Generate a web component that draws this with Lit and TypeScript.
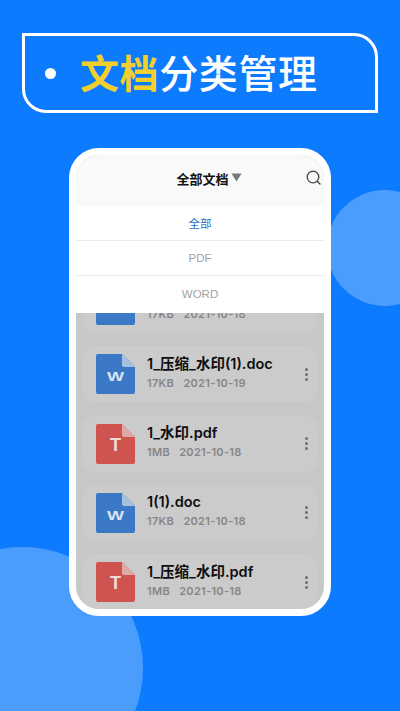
import { LitElement, html, css, svg } from "lit";
import { customElement } from "lit/decorators.js";

interface Doc { name: string; meta: string; size: string; kind: "w" | "t"; }

const DOCS: Doc[] = [
  { name: "", size: "17KB", meta: "2021-10-18", kind: "w" },
  { name: "1_压缩_水印(1).doc", size: "17KB", meta: "2021-10-19", kind: "w" },
  { name: "1_水印.pdf", size: "1MB", meta: "2021-10-18", kind: "t" },
  { name: "1(1).doc", size: "17KB", meta: "2021-10-18", kind: "w" },
  { name: "1_压缩_水印.pdf", size: "1MB", meta: "2021-10-18", kind: "t" },
];

@customElement("app-root")
export class AppRoot extends LitElement {
  static styles = css`
    :host { display: block; width: 400px; height: 711px; font-family: "Inter", "Liberation Sans", "Noto Sans CJK SC", sans-serif; }
    .page { position: relative; width: 400px; height: 711px; background: #0c7bfe; overflow: hidden; padding: 33px 22px 0; box-sizing: border-box; display: flex; flex-direction: column; align-items: center; }
    .blob { position: absolute; border-radius: 50%; background: #4b9dfd; }
    .blob.r { width: 116px; height: 116px; left: 327px; top: 190px; }
    .blob.l { width: 242px; height: 242px; left: -99px; top: 547px; }
    .banner { position: relative; width: 356px; height: 80px; box-sizing: border-box; border: 3px solid #fff; border-radius: 0 24px 0 24px; display: flex; align-items: center; padding-left: 20px; flex: none; }
    .dot { width: 11px; height: 11px; border-radius: 50%; background: #fff; flex: none; margin-right: 24px; }
    .title { font-family: "Noto Sans CJK SC", sans-serif; font-size: 39px; font-weight: 500; letter-spacing: 0.6px; color: #fff; line-height: 1; white-space: nowrap; margin-top: -4px; }
    .title b { color: #f3cf2e; font-weight: 700; }
    .phone { position: relative; margin-top: 35px; width: 262px; height: 468px; box-sizing: border-box; border: 7px solid #fff; border-radius: 30px; background: #c7c7c7; overflow: hidden; flex: none; }
    .header { height: 51px; background: #f9f9f9; display: flex; align-items: center; justify-content: center; position: relative; box-sizing: border-box; padding: 0 0 5px 18px; }
    .header .ttl { font-family: "Noto Sans CJK SC", sans-serif; font-size: 13px; font-weight: 700; color: #111; }
    .caret { margin-left: 2px; margin-top: -2px; flex: none; }
    .search { position: absolute; right: 1px; top: 14px; }
    .menu { position: absolute; left: 0; right: 0; top: 51px; background: #fff; z-index: 2; padding-bottom: 2px; }
    .opt { height: 35px; display: flex; align-items: center; justify-content: center; font-family: "Liberation Sans", "Noto Sans CJK SC", sans-serif; font-size: 11.5px; color: #a2a2a2; border-bottom: 1px solid #ececec; box-sizing: border-box; }
    .opt:last-child { border-bottom: none; }
    .opt.on { color: #1c73c8; }
    .list { display: flex; flex-direction: column; gap: 13.3px; padding: 71px 7px 0 7px; }
    .card { height: 56px; flex: none; border-radius: 11px; background: #cbcbcb; display: flex; align-items: center; padding: 0 6px 0 13px; box-sizing: border-box; }
    .icon { flex: none; width: 39px; height: 40px; margin-right: 12px; display: block; }
    .info { flex: 1; min-width: 0; display: flex; flex-direction: column; gap: 3px; margin-top: -3px; }
    .name { font-size: 14.5px; font-weight: 600; color: #0d0d0d; line-height: 18px; min-height: 18px; white-space: nowrap; font-family: "Inter", "Noto Sans CJK SC", sans-serif; }
    .meta { font-size: 11px; font-weight: 600; color: #868686; line-height: 15px; white-space: pre; letter-spacing: 0.3px; }
    .more { flex: none; display: flex; flex-direction: column; gap: 2px; margin-right: 3px; }
    .more i { display: block; width: 3px; height: 3px; border-radius: 50%; background: #6f6f6f; }
    .glyph { font-family: "Liberation Sans", sans-serif; font-weight: 700; }
  `;

  private icon(kind: "w" | "t") {
    const body = kind === "w" ? "#3b79c6" : "#cf5450";
    const fold = kind === "w" ? "#a5c1e0" : "#dfaaa6";
    return html`<svg class="icon" viewBox="0 0 39 40" aria-hidden="true">
      <path d="M2 0H26L39 13V38a2 2 0 0 1-2 2H2a2 2 0 0 1-2-2V2a2 2 0 0 1 2-2Z" fill=${body}></path>
      <path d="M26 0L39 13H28a2 2 0 0 1-2-2Z" fill=${fold}></path>
      ${kind === "w"
        ? svg`<text class="glyph" x="19.5" y="27" text-anchor="middle" font-size="13.5" textLength="17" lengthAdjust="spacingAndGlyphs" fill="#d8e4f2">W</text>`
        : svg`<text class="glyph" x="19.5" y="27" text-anchor="middle" font-size="18" fill="#f3dad8">T</text>`}
    </svg>`;
  }

  render() {
    return html`<div class="page">
      <div class="blob r"></div>
      <div class="blob l"></div>
      <div class="banner">
        <span class="dot"></span>
        <span class="title"><b>文档</b>分类管理</span>
      </div>
      <div class="phone">
        <div class="header">
          <span class="ttl">全部文档</span>
          <svg class="caret" width="11" height="9" viewBox="0 0 11 9"><path d="M0.5 0.5H10.5L5.5 8.5Z" fill="#777"></path></svg>
          <svg class="search" width="18" height="18" viewBox="0 0 18 18"><circle cx="8" cy="8" r="5.8" fill="none" stroke="#444" stroke-width="1.3"></circle><path d="M12.2 12.2L15 15" stroke="#444" stroke-width="1.4" stroke-linecap="round"></path></svg>
        </div>
        <div class="menu">
          <div class="opt on">全部</div>
          <div class="opt">PDF</div>
          <div class="opt">WORD</div>
        </div>
        <div class="list">
          ${DOCS.map(d => html`<div class="card">
            ${this.icon(d.kind)}
            <div class="info">
              <div class="name">${d.name}</div>
              <div class="meta">${d.size}   ${d.meta}</div>
            </div>
            <div class="more"><i></i><i></i><i></i></div>
          </div>`)}
        </div>
      </div>
    </div>`;
  }
}
